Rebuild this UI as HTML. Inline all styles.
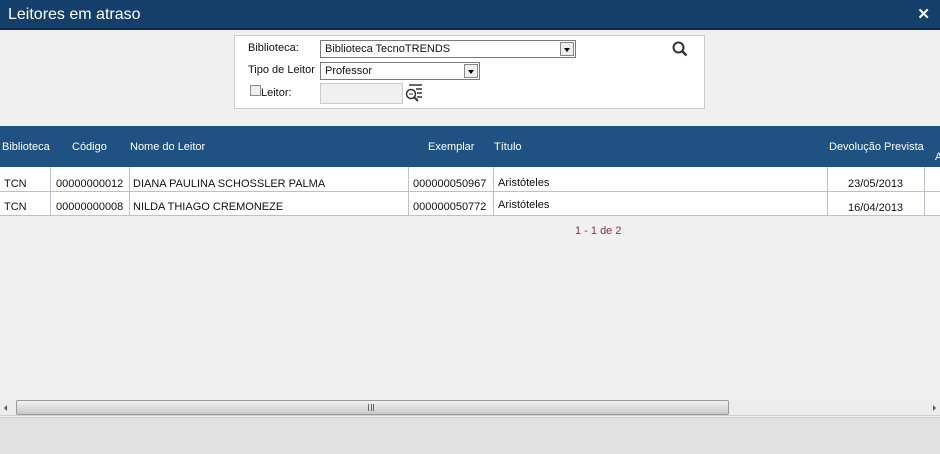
<!DOCTYPE html>
<html><head><meta charset="utf-8"><style>
*{margin:0;padding:0;box-sizing:border-box}
body{width:940px;height:454px;overflow:hidden;background:#f0f0f0;font-family:"Liberation Sans",sans-serif;font-size:11px;color:#111;position:relative}
.abs{position:absolute}
.title{left:0;top:0;width:940px;height:30px;background:#143f6b;border-bottom:2px solid #0c2a4a;color:#fff;font-family:"Liberation Sans",sans-serif;font-size:16px;line-height:29px;padding-left:8px}
.x{right:10px;top:0;color:#fff;font-weight:bold;font-size:15px;line-height:29px}
.form{left:234px;top:35px;width:471px;height:74px;background:#fff;border:1px solid #ccc}
.sel{background:#fff;border:1px solid #7a7a7a;height:18px;font-size:11px;line-height:17px;padding-left:4px}
.btn{position:absolute;right:1px;top:1px;width:14px;height:14px;border:1px solid #888;background:#eee}
.btn:after{content:"";position:absolute;left:3px;top:5px;border-left:3px solid transparent;border-right:3px solid transparent;border-top:4px solid #000}
.hdr{left:0;top:126px;width:940px;height:41px;background:#1f5282;color:#fff}
.hdr span{position:absolute;top:15px}
.rows{left:0;top:167px;width:940px;height:49px;background:#fff}
.rows div{position:absolute}
.hl{position:absolute;left:0;width:940px;height:1px;background:#b8c2cc}
.vl{position:absolute;top:0;width:1px;height:49px;background:#b8c2cc}
</style></head><body>
<div class="abs title">Leitores em atraso</div>
<div class="abs x">✕</div>
<div class="abs form">
 <div class="abs" style="left:13px;top:6px">Biblioteca:</div>
 <div class="abs sel" style="left:85px;top:4px;width:256px">Biblioteca TecnoTRENDS<div class="btn"></div></div>
 <div class="abs" style="left:13px;top:28px">Tipo de Leitor</div>
 <div class="abs sel" style="left:85px;top:26px;width:160px">Professor<div class="btn"></div></div>
 <div class="abs" style="left:15px;top:49px;width:11px;height:11px;border:1px solid #8a8a8a;background:#eee"></div>
 <div class="abs" style="left:26px;top:51px">Leitor:</div>
 <div class="abs" style="left:85px;top:47px;width:83px;height:21px;background:#f0f0f0;border:1px solid #ccc"></div>
 <svg class="abs" style="left:169px;top:48px" width="20" height="20" viewBox="0 0 20 20"><path d="M5 1h13M12 5h6M13 9h5M13 13h5" stroke="#333" stroke-width="1.5"/><circle cx="7" cy="10" r="4.5" fill="none" stroke="#333" stroke-width="1.5"/><path d="M10 13l4 4" stroke="#333" stroke-width="2"/><path d="M5 10h4" stroke="#333"/></svg>
 <svg class="abs" style="left:437px;top:5px" width="16" height="16" viewBox="0 0 16 16"><circle cx="6.5" cy="6.5" r="5" fill="none" stroke="#333" stroke-width="2"/><path d="M10 10l4.5 4.5" stroke="#333" stroke-width="2.5"/></svg>
</div>
<div class="abs hdr">
 <span style="left:2px">Biblioteca</span><span style="left:72px">Código</span><span style="left:130px">Nome do Leitor</span><span style="left:428px">Exemplar</span><span style="left:494px">Título</span><span style="left:829px">Devolução Prevista</span><span style="left:935px;top:25px">A</span>
</div>
<div class="abs rows">
 <div class="hl" style="top:0;background:#fff"></div>
 <div class="hl" style="top:24px"></div>
 <div class="hl" style="top:48px"></div>
 <div class="vl" style="left:50px"></div><div class="vl" style="left:129px"></div><div class="vl" style="left:408px"></div><div class="vl" style="left:493px"></div><div class="vl" style="left:827px"></div><div class="vl" style="left:924px"></div>
 <div style="left:4px;top:11px">TCN</div><div style="left:56px;top:11px">00000000012</div><div style="left:133px;top:11px">DIANA PAULINA SCHOSSLER PALMA</div><div style="left:413px;top:11px">000000050967</div><div style="left:498px;top:10px">Aristóteles</div><div style="left:848px;top:11px">23/05/2013</div>
 <div style="left:4px;top:34px">TCN</div><div style="left:56px;top:34px">00000000008</div><div style="left:133px;top:34px">NILDA THIAGO CREMONEZE</div><div style="left:413px;top:34px">000000050772</div><div style="left:498px;top:32px">Aristóteles</div><div style="left:848px;top:35px">16/04/2013</div>
</div>
<div class="abs" style="left:575px;top:225px;color:#8a3040">1 - 1 de 2</div>
<div class="abs" style="left:0;top:400px;width:940px;height:16px;background:#ececec;border-bottom:1px solid #d0d0d0"></div>
<div class="abs" style="left:4px;top:405px;border-top:3px solid transparent;border-bottom:3px solid transparent;border-right:3px solid #555"></div>
<div class="abs" style="left:933px;top:405px;border-top:3px solid transparent;border-bottom:3px solid transparent;border-left:3px solid #555"></div>
<div class="abs" style="left:16px;top:400px;width:713px;height:15px;background:linear-gradient(#f2f2f2,#c8c8cc);border:1px solid #999;border-radius:2px"></div>
<div class="abs" style="left:368px;top:404px;width:6px;height:7px;border-left:1px solid #666;border-right:1px solid #666"><div style="margin-left:1.5px;width:1px;height:7px;background:#666"></div></div>
<div class="abs" style="left:0;top:417px;width:940px;height:37px;background:#e1e1e1;border-top:1px solid #cfcfcf"></div>
</body></html>
